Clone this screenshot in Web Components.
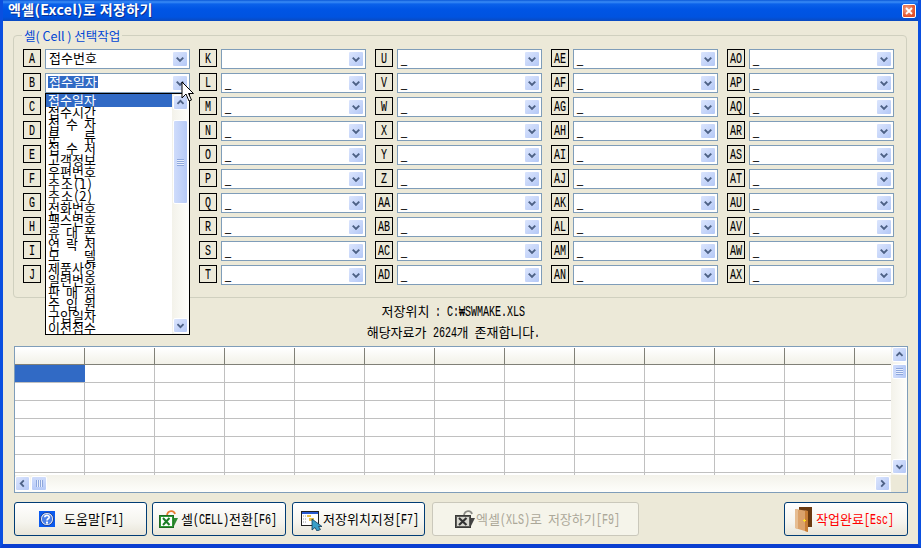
<!DOCTYPE html>
<html><head><meta charset="utf-8"><style>
html,body{margin:0;padding:0;width:921px;height:548px;overflow:hidden;background:#ece9d8}
</style></head><body>
<x-window title="엑셀(Excel)로 저장하기">
  <x-group legend="셀( Cell ) 선택작업" id="grp"></x-group>
  <x-info></x-info>
  <x-sheet></x-sheet>
  <x-toolbar>
    <x-btn w="133" icon="help" pad="24" gap="9">도움말<x-lat>[F1]</x-lat></x-btn>
    <x-btn w="134" icon="excel" pad="6" gap="3" ml="5">셀<x-lat>(CELL)</x-lat>전환<x-lat>[F6]</x-lat></x-btn>
    <x-btn w="133" icon="loc" pad="8" gap="0" ml="6">저장위치지정<x-lat>[F7]</x-lat></x-btn>
    <x-btn w="207" icon="xls" pad="22" gap="1" ml="7" disabled>엑셀<x-lat>(XLS)</x-lat>로<x-lat> </x-lat>저장하기<x-lat>[F9]</x-lat></x-btn>
    <x-btn w="124" icon="door" pad="10" gap="4" ml="145" red>작업완료<x-lat>[Esc]</x-lat></x-btn>
  </x-toolbar>
  <x-dropdown></x-dropdown>
  <x-cursor></x-cursor>
</x-window>
<script>
const KR='"Noto Sans CJK KR","DejaVu Sans",sans-serif';
const MONO='"Liberation Mono","Noto Sans CJK KR",monospace';
function def(name,html,cls){
  customElements.define(name,class extends HTMLElement{
    connectedCallback(){
      if(this.shadowRoot)return;
      const s=this.attachShadow({mode:'open'});
      s.innerHTML=typeof html==='function'?html(this):html;
      if(cls)cls(this,s);
    }
  });
}
def('x-lat',e=>`<style>
:host{display:inline-block;width:${Array.from(e.textContent).length*6}px;line-height:1;vertical-align:baseline}
span{display:inline-block;transform:scaleX(.667);transform-origin:0 50%;font:15px/13px ${MONO};white-space:pre;-webkit-text-stroke:.1px currentColor}
</style><span><slot></slot></span>`);
const chev=(d,c='#4d6185')=>{
  const p={d:'M-3.5,-1.5 L0,2 L3.5,-1.5',u:'M-3.5,1.5 L0,-2 L3.5,1.5',l:'M1.5,-3.5 L-2,0 L1.5,3.5',r:'M-1.5,-3.5 L2,0 L-1.5,3.5'}[d];
  return `<svg width="100%" height="100%" viewBox="-7.5 -7.5 15 15" style="display:block"><path d="${p}" fill="none" stroke="${c}" stroke-width="2.1"/></svg>`;
};
def('x-arrow',e=>`<style>
:host{display:block;width:${e.getAttribute('s')||15}px;height:${e.getAttribute('s')||15}px;box-sizing:border-box;border:1px solid #fff;border-radius:2px;background:linear-gradient(135deg,#dbe5fd,#b4c8f6);overflow:hidden;flex:none}
</style>${chev(e.getAttribute('d')||'d')}`);
def('x-thumb',e=>{const h=e.hasAttribute('h');return `<style>
:host{display:flex;align-items:center;justify-content:center;box-sizing:border-box;border:1px solid #fff;border-radius:2px;background:linear-gradient(${h?'180deg':'90deg'},#cfdcfb,#b6caf7);width:${e.getAttribute('w')||15}px;height:${e.getAttribute('ht')||15}px;flex:none}
i{display:block;${h?'width:7px;height:7px;background:repeating-linear-gradient(90deg,#8ea7dc 0 1px,#e8effd 1px 2px)':'width:7px;height:7px;background:repeating-linear-gradient(180deg,#8ea7dc 0 1px,#e8effd 1px 2px)'}}
</style><i></i>`});
def('x-window',e=>`<style>
:host{display:block;width:921px;height:548px;box-sizing:border-box;position:relative;background:#ece9d8;border-left:3px solid #0a4fe0;border-right:3px solid #0a4fe0;border-bottom:4px solid #0a3fd0;font:13px ${KR};color:#000;overflow:hidden}
.t{margin:0 -3px;height:21px;background:linear-gradient(180deg,#0a58d8 0,#3a8cf6 2px,#0b62ea 4px,#0055e5 9px,#0053e0 17px,#0a49c0 21px);color:#fff;display:flex;align-items:center;padding:0 5px 2px 8px;box-sizing:border-box;justify-content:space-between}
.t b{font:bold 14px/15px ${KR};letter-spacing:.4px;text-shadow:1px 1px 0 #0a2f90;white-space:pre}
.x{width:14px;height:14px;margin-top:2px;box-sizing:border-box;border:1px solid #fff;border-radius:2px;background:radial-gradient(circle at 35% 35%,#f4a888,#e2502a 70%);display:block}
.c{display:flex;flex-direction:column}
</style><div class="t"><b>${e.getAttribute('title')}</b>
<svg class="x" viewBox="0 0 12 12"><path d="M3,3 L9,9 M9,3 L3,9" stroke="#fff" stroke-width="1.8"/></svg></div>
<div class="c"><slot></slot></div>`);
def('x-group',e=>`<style>
:host{display:block;margin:14px 11px 0 10px;height:263px;box-sizing:border-box;border:1px solid #d0d0bf;border-radius:4px;position:relative}
.l{position:absolute;left:8px;top:-7px;background:#ece9d8;padding:0 2px;font:12.5px/13px ${KR};color:#0046d5;white-space:pre}
.g{display:grid;grid-template-columns:repeat(5,176px);grid-template-rows:repeat(10,24px);grid-auto-flow:column;padding:13px 0 0 9px}
</style><div class="l">${e.getAttribute('legend')}</div><div class="g" id="g"></div>`,(e,s)=>{
  const all=['A','B','C','D','E','F','G','H','I','J','K','L','M','N','O','P','Q','R','S','T','U','V','W','X','Y','Z','AA','AB','AC','AD','AE','AF','AG','AH','AI','AJ','AK','AL','AM','AN','AO','AP','AQ','AR','AS','AT','AU','AV','AW','AX'];
  const g=s.getElementById('g');
  all.forEach((k,i)=>{
    const f=document.createElement('x-field');
    f.setAttribute('k',k);
    let v='_';
    if(k==='A')v='접수번호';if(k==='B'){v='접수일자';f.setAttribute('sel','')}if(k==='K'||(i>=2&&i<10))v='';
    f.setAttribute('v',v);
    g.appendChild(f);
  });
});
def('x-field',e=>{const v=e.getAttribute('v');return `<style>
:host{display:flex;align-items:flex-start;gap:4px}
.k{box-sizing:border-box;width:18px;height:18px;border:1px solid #000;text-align:center;line-height:15px;overflow:hidden;white-space:pre}
.c{box-sizing:border-box;width:145px;height:20px;border:1px solid #7f9db9;background:#fff;display:flex;align-items:center;justify-content:space-between;padding:0 0 0 2px}
.v{font:13px/12px ${KR};padding:0 1px;white-space:pre;margin-bottom:3px;display:block}
.v.s{background:#316ac5;color:#fff}
.v.u{margin-bottom:0}
x-arrow{margin:0 1px 0 0}
</style><div class="k"><x-lat>${e.getAttribute('k')}</x-lat></div><div class="c"><span class="v ${e.hasAttribute('sel')?'s':''} ${v==='_'?'u':''}">${v==='_'?'<x-lat>_</x-lat>':v}</span><x-arrow d="d" s="16"></x-arrow></div>`});
def('x-info',`<style>
:host{display:block;text-align:center;height:48px;padding:2px 14px 0 0;box-sizing:border-box;font:13px/21px ${KR};white-space:pre}
div{height:21px}
</style><div>저장위치<x-lat> : C:₩SWMAKE.XLS</x-lat></div><div>해당자료가<x-lat> 2624</x-lat>개<x-lat> </x-lat>존재합니다<x-lat>.</x-lat></div>`);
def('x-sheet',e=>`<style>
:host{display:grid;margin-left:11px;width:894px;height:147px;box-sizing:border-box;border:1px solid #7f9db9;background:#fff;grid-template-columns:1fr 16px;grid-template-rows:128px 17px;overflow:hidden}
.m{overflow:hidden;position:relative;border-top:1px solid #fff}
.h{display:grid;grid-template-columns:repeat(13,70px);height:16px;box-sizing:content-box;border-bottom:1px solid #808077;background:linear-gradient(180deg,#fff,#f2f1e8)}
.h div{border-right:1px solid #808077;height:16px;box-sizing:border-box}
.r{display:grid;grid-template-columns:repeat(13,70px);height:18px;box-sizing:border-box;border-bottom:1px solid #c0c0c0}
.r div{border-right:1px solid #c0c0c0;box-sizing:border-box}
.r .s{background:#316ac5;border-right:none}
.vs{background:linear-gradient(90deg,#f3f2ea,#fefefb);display:flex;flex-direction:column;justify-content:space-between;padding:0 1px 1px 1px;box-sizing:border-box}
.vt{display:flex;flex-direction:column;gap:2px}
.hs{background:linear-gradient(180deg,#f3f2ea,#fefefb);display:flex;justify-content:space-between;padding:1px 1px 0 0;box-sizing:border-box}
.hl{display:flex;gap:1px}
.cn{background:#ece9d8}
</style>
<div class="m"><div class="h">${Array.from({length:13},()=>'<div></div>').join('')}</div>
${Array.from({length:7},(_,i)=>`<div class="r">${Array.from({length:13},(_,j)=>`<div class="${i==0&&j==0?'s':''}"></div>`).join('')}</div>`).join('')}
</div>
<div class="vs"><div class="vt"><x-arrow d="u"></x-arrow><x-thumb></x-thumb></div><x-arrow d="d"></x-arrow></div>
<div class="hs"><div class="hl"><x-arrow d="l"></x-arrow><x-thumb h w="16"></x-thumb></div><x-arrow d="r"></x-arrow></div>
<div class="cn"></div>`);
def('x-toolbar',`<style>:host{display:flex;margin:9px 0 0 11px}</style><slot></slot>`);
const icons={
help:`<svg width="16" height="16" viewBox="0 0 16 16"><rect width="16" height="16" fill="#0a5af0"/><circle cx="8" cy="8" r="6.5" fill="#fff" stroke="#1a3a8f"/><circle cx="8" cy="8" r="5.2" fill="#4a7fe8"/><path d="M5.8,6.3 C5.8,3.8 10.2,3.8 10.2,6.2 C10.2,7.8 8,7.7 8,9.5" fill="none" stroke="#fff" stroke-width="1.6"/><rect x="7" y="10.6" width="2" height="2" fill="#fff"/></svg>`,
excel:`<svg width="19" height="19" viewBox="0 0 19 19"><path d="M8,5 C9,0 15,0 16,4" fill="none" stroke="#e87a30" stroke-width="1.8"/><rect x="0.5" y="5.5" width="14" height="12" fill="#2f9a35" stroke="#1f6a22"/><rect x="2" y="7" width="11" height="9" fill="#fff"/><path d="M4,8 L10.5,15 M10.5,8 L4,15" stroke="#1b7d25" stroke-width="2"/><path d="M14.5,8 L19,8 L14.5,17z" fill="#2f8c33"/></svg>`,
loc:`<svg width="22" height="20" viewBox="0 0 22 20" style="margin-top:3px"><rect x="0.5" y="0.5" width="17" height="14" fill="#fff" stroke="#222"/><rect x="1" y="1" width="16" height="2" fill="#2a5ad0"/><path d="M2,5h3M2,8h3M2,11h3" stroke="#999" stroke-dasharray="1 1"/><rect x="6" y="4" width="4" height="2" fill="#ecc24a"/><rect x="8" y="7" width="5" height="3" fill="#ecc24a"/><path d="M11,8 L11,19 L14,16.5 L16,20 L19.5,18.5 L17.5,15.5 L21,15.5 Z" fill="#3a9fc8" stroke="#123a58" stroke-width=".8"/></svg>`,
xls:`<svg width="20" height="19" viewBox="0 0 20 19"><path d="M9,5 C10,0 16,0 17,4" fill="none" stroke="#8a8a84" stroke-width="1.8"/><rect x="0.5" y="5.5" width="15" height="12" fill="#5c5c58" stroke="#3a3a38"/><rect x="2" y="7" width="12" height="9" fill="#d8d8d0"/><path d="M4,8 L11.5,15 M11.5,8 L4,15" stroke="#333" stroke-width="2.2"/><path d="M15.5,8 L20,8 L15.5,17z" fill="#444"/></svg>`,
door:`<svg width="17" height="25" viewBox="0 0 17 25"><rect x="4" y="0" width="13" height="20" fill="#6a3a10"/><path d="M0,2 L13,4 L13,25 L0,21Z" fill="#dba26b"/><path d="M0,2 L3,2.5 L3,22 L0,21Z" fill="#e6bd92"/><path d="M10,3.5 L13,4 L13,25 L10,24Z" fill="#c87d35"/><rect x="8" y="13" width="3" height="1" fill="#ffe020"/><rect x="9" y="12" width="1" height="3" fill="#ffe020"/></svg>`};
def('x-btn',e=>{
  const dis=e.hasAttribute('disabled'),red=e.hasAttribute('red');
  return `<style>
:host{display:flex;align-items:center;box-sizing:border-box;width:${e.getAttribute('w')}px;height:34px;margin-left:${e.getAttribute('ml')||0}px;padding-left:${e.getAttribute('pad')}px;gap:${e.getAttribute('gap')}px;border:1px solid ${dis?'#cac8bb':'#003c74'};border-radius:3px;background:${dis?'#f5f4ea':'linear-gradient(180deg,#fff 0,#f5f4ee 60%,#e8e5d8 100%)'};color:${dis?'#aca899':red?'#f00':'#000'};font:13px/14px ${KR};white-space:pre;flex:none}
svg{display:block;flex:none}
</style>${icons[e.getAttribute('icon')]}<span><slot></slot></span>`});
def('x-dropdown',e=>{
  const items=['접수일자','접수시간','접 수 자','분 류','접 수 처','고객정보','우편번호','주소(1)','주소(2)','전화번호','팩스번호','휴 대 폰','연 락 처','모 델','제품사양','일련번호','판 매 점','수 입 원','구입일자','이전접수'];
  return `<style>
:host{position:absolute;left:42px;top:93px;width:145px;height:242px;box-sizing:border-box;border:1px solid #000;background:#fff;display:flex;font:13px/12px ${KR}}
.l{flex:1}
.i{height:12px;padding-left:2px;white-space:pre;display:flex}
.i span{width:48px;display:flex;justify-content:space-between}
.i b{font-weight:400}
.i .n{letter-spacing:1px}
.i.s{background:#316ac5;color:#fff;height:13px;margin-bottom:-1px}
.sb{width:17px;background:linear-gradient(90deg,#f3f2ea,#fefefb);display:flex;flex-direction:column;padding:1px 0 1px 1px;box-sizing:border-box}
x-thumb{margin-top:10px}
x-arrow:last-child{margin-top:auto}
</style><div class="l">${items.map((t,i)=>`<div class="i ${i==0?'s':''}"><span class="${t.includes('(')?'n':''}">${t.includes(' ')?t.split(' ').map(c=>`<b>${c}</b>`).join(''):t}</span></div>`).join('')}</div>
<div class="sb"><x-arrow d="u"></x-arrow><x-thumb ht="84"></x-thumb><x-arrow d="d"></x-arrow></div>`});
def('x-cursor',`<style>:host{position:absolute;left:178px;top:81px;width:14px;height:24px}svg{display:block}</style><svg width="14" height="24" viewBox="0 0 14 24"><path d="M1,1 L1,17 L5,13 L8,20 L10.5,19 L7.5,12.5 L12.5,12.5 Z" fill="#fff" stroke="#000" stroke-width="1"/></svg>`);
</script>
</body></html>
